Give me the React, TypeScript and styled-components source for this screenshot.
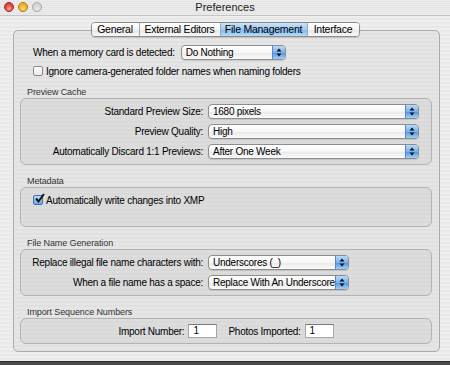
import React from 'react';
import styled, { createGlobalStyle } from 'styled-components';

const GlobalStyle = createGlobalStyle`
  html, body {
    margin: 0;
    padding: 0;
  }
  body {
    width: 450px;
    height: 365px;
    overflow: hidden;
    font-family: "Liberation Sans", Arial, sans-serif;
    font-size: 10px;
    letter-spacing: -0.25px;
    color: #000;
  }
`;

const Window = styled.div`
  width: 450px;
  height: 365px;
  display: flex;
  flex-direction: column;
  background: repeating-linear-gradient(180deg, #eeeeee 0 2px, #e8e8e8 2px 4px);
`;

const TitleBar = styled.div`
  height: 15px;
  display: grid;
  grid-template-columns: 1fr auto 1fr;
  align-items: center;
  border-bottom: 1px solid #c4c4c4;
  background: repeating-linear-gradient(180deg, #ececec 0 1px, #e4e4e4 1px 2px);
`;

const Lights = styled.div`
  display: flex;
  gap: 4px;
  padding-left: 4px;
  margin-top: -2px;
`;

const Light = styled.span<{ $color: string; $edge: string }>`
  width: 10px;
  height: 10px;
  border-radius: 50%;
  box-sizing: border-box;
  border: 1px solid ${(p) => p.$edge};
  background: radial-gradient(circle at 50% 70%, #fff8 0, transparent 55%),
    ${(p) => p.$color};
`;

const Title = styled.div`
  font-size: 11px;
  letter-spacing: 0;
  color: #222;
  margin-top: -2px;
`;

const Body = styled.div`
  display: flex;
  flex-direction: column;
  padding-top: 6px;
`;

const Tabs = styled.div`
  align-self: center;
  display: flex;
  height: 13px;
  border: 1px solid #8c8c8c;
  border-radius: 4px;
  overflow: hidden;
  margin-bottom: -7px;
  position: relative;
  z-index: 1;
  box-shadow: 0 1px 1px rgba(0, 0, 0, 0.15);
`;

const Tab = styled.div<{ $width: number; $active?: boolean }>`
  box-sizing: border-box;
  width: ${(p) => p.$width}px;
  text-align: center;
  line-height: 13px;
  font-size: 10.5px;
  border-left: 1px solid #a8a8a8;
  background: ${(p) =>
    p.$active
      ? 'linear-gradient(180deg, #c9e2fb 0%, #9ccaf5 50%, #7fb7ef 51%, #b7dcfb 100%)'
      : 'linear-gradient(180deg, #ffffff 0%, #f4f4f4 50%, #e6e6e6 51%, #f8f8f8 100%)'};
  &:first-child {
    border-left: none;
  }
`;

const Panel = styled.div`
  box-sizing: border-box;
  margin-left: 13px;
  width: 427px;
  height: 322px;
  border: 1px solid #ababab;
  border-radius: 5px;
  background: repeating-linear-gradient(180deg, #e6e6e6 0 2px, #e1e1e1 2px 4px);
  padding: 14px 7px 0 6px;
  display: flex;
  flex-direction: column;
`;

const TopRow = styled.div`
  display: flex;
  align-items: center;
  gap: 6px;
  height: 15px;
  padding-left: 13px;
`;

const CheckRow = styled.label<{ $inset: number; $top: number }>`
  display: flex;
  align-items: center;
  gap: 3px;
  height: 12px;
  margin-top: ${(p) => p.$top}px;
  padding-left: ${(p) => p.$inset}px;
`;

const Box = styled.span<{ $checked?: boolean }>`
  width: 10px;
  height: 10px;
  box-sizing: border-box;
  border-radius: 2px;
  border: 1px solid ${(p) => (p.$checked ? '#3f6fb0' : '#8a8a8a')};
  background: ${(p) =>
    p.$checked
      ? 'linear-gradient(180deg, #bcdcfb, #6aa8ec)'
      : 'linear-gradient(180deg, #ffffff, #e9e9e9)'};
  position: relative;
  flex: none;
`;

const Group = styled.div<{ $first?: boolean }>`
  margin-top: ${(p) => (p.$first ? 10 : 11)}px;
  display: flex;
  flex-direction: column;
`;

const GroupLabel = styled.div`
  height: 11px;
  line-height: 11px;
  font-size: 9px;
  letter-spacing: -0.1px;
  color: #333;
  padding-left: 7px;
`;

const GroupBox = styled.div<{ $height: number; $center?: boolean }>`
  box-sizing: border-box;
  height: ${(p) => p.$height}px;
  border: 1px solid #b3b3b3;
  border-radius: 6px;
  background: rgba(0, 0, 0, 0.035);
  padding: 5px 0 0 0;
  display: flex;
  flex-direction: column;
  gap: 6px;
  align-items: ${(p) => (p.$center ? 'center' : 'stretch')};
`;

const FieldRow = styled.div`
  display: flex;
  align-items: center;
  gap: 5px;
  height: 14px;
`;

const FieldLabel = styled.div`
  width: 182px;
  text-align: right;
  white-space: nowrap;
`;

const Popup = styled.div<{ $width: number }>`
  box-sizing: border-box;
  width: ${(p) => p.$width}px;
  height: 15px;
  display: flex;
  align-items: center;
  border: 1px solid #8d8d8d;
  border-radius: 4px;
  background: linear-gradient(180deg, #ffffff 0%, #f6f6f6 50%, #e8e8e8 51%, #fbfbfb 100%);
  box-shadow: 0 1px 1px rgba(0, 0, 0, 0.12);
  overflow: hidden;
  flex: none;
`;

const PopupText = styled.span`
  flex: 1;
  padding-left: 4px;
  white-space: nowrap;
  overflow: hidden;
`;

const Stepper = styled.span`
  width: 12px;
  height: 100%;
  display: flex;
  align-items: center;
  justify-content: center;
  border-left: 1px solid #5c86c4;
  background: linear-gradient(180deg, #b9dafb 0%, #79b2ee 50%, #4f93e3 51%, #9fd0fb 100%);
`;

const ImportRow = styled.div`
  display: flex;
  align-items: center;
  height: 14px;
`;

const InputLabel = styled.span`
  margin-right: 4px;
  white-space: nowrap;
`;

const NumberInput = styled.div<{ $gap?: number }>`
  box-sizing: border-box;
  width: 29px;
  height: 14px;
  background: #fff;
  border: 1px solid #a5a5a5;
  border-top-color: #777;
  padding-left: 4px;
  line-height: 12px;
  margin-right: ${(p) => p.$gap ?? 0}px;
`;

const BottomEdge = styled.div`
  margin-top: auto;
  box-sizing: border-box;
  height: 4px;
  background: #4a4a4a;
  border-top: 1px solid #2a2a2a;
`;

function Arrows() {
  return (
    <svg width="6" height="9" viewBox="0 0 6 9">
      <path d="M3 0.5 L5.5 3.5 L0.5 3.5 Z" fill="#111" />
      <path d="M3 8.5 L5.5 5.5 L0.5 5.5 Z" fill="#111" />
    </svg>
  );
}

function Check() {
  return (
    <svg
      width="11"
      height="11"
      viewBox="0 0 11 11"
      style={{ position: 'absolute', left: 0, top: -3 }}
    >
      <path d="M2 5.5 L4.5 8.5 L10 1" stroke="#111" strokeWidth="2" fill="none" />
    </svg>
  );
}

function PopupButton({ value, width }: { value: string; width: number }) {
  return (
    <Popup $width={width}>
      <PopupText>{value}</PopupText>
      <Stepper>
        <Arrows />
      </Stepper>
    </Popup>
  );
}

function Field({ label, value, width }: { label: string; value: string; width: number }) {
  return (
    <FieldRow>
      <FieldLabel>{label}</FieldLabel>
      <PopupButton value={value} width={width} />
    </FieldRow>
  );
}

export default function App() {
  return (
    <Window>
      <GlobalStyle />
      <TitleBar>
        <Lights>
          <Light $color="#e0443c" $edge="#a02a24" />
          <Light $color="#f0b020" $edge="#b07a10" />
          <Light $color="#d4d4d4" $edge="#a8a8a8" />
        </Lights>
        <Title>Preferences</Title>
        <div />
      </TitleBar>
      <Body>
        <Tabs>
          <Tab $width={47}>General</Tab>
          <Tab $width={81}>External Editors</Tab>
          <Tab $width={87} $active>File Management</Tab>
          <Tab $width={52}>Interface</Tab>
        </Tabs>
        <Panel>
          <TopRow>
            <span>When a memory card is detected:</span>
            <PopupButton value="Do Nothing" width={105} />
          </TopRow>
          <CheckRow $inset={13} $top={5}>
            <Box />
            <span>Ignore camera-generated folder names when naming folders</span>
          </CheckRow>

          <Group $first>
            <GroupLabel>Preview Cache</GroupLabel>
            <GroupBox $height={67}>
              <Field label="Standard Preview Size:" value="1680 pixels" width={211} />
              <Field label="Preview Quality:" value="High" width={211} />
              <Field label="Automatically Discard 1:1 Previews:" value="After One Week" width={211} />
            </GroupBox>
          </Group>

          <Group>
            <GroupLabel>Metadata</GroupLabel>
            <GroupBox $height={40}>
              <CheckRow $inset={12} $top={1}>
                <Box $checked>
                  <Check />
                </Box>
                <span>Automatically write changes into XMP</span>
              </CheckRow>
            </GroupBox>
          </Group>

          <Group>
            <GroupLabel>File Name Generation</GroupLabel>
            <GroupBox $height={47}>
              <Field label="Replace illegal file name characters with:" value="Underscores (_)" width={141} />
              <Field label="When a file name has a space:" value="Replace With An Underscore" width={141} />
            </GroupBox>
          </Group>

          <Group>
            <GroupLabel>Import Sequence Numbers</GroupLabel>
            <GroupBox $height={26} $center>
              <ImportRow>
                <InputLabel>Import Number:</InputLabel>
                <NumberInput $gap={11}>1</NumberInput>
                <InputLabel>Photos Imported:</InputLabel>
                <NumberInput>1</NumberInput>
              </ImportRow>
            </GroupBox>
          </Group>
        </Panel>
      </Body>
      <BottomEdge />
    </Window>
  );
}
